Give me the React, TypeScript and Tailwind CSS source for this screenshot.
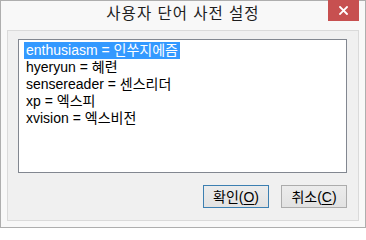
const entries = [
  { key: "enthusiasm", value: "인쑤지에즘" },
  { key: "hyeryun", value: "혜련" },
  { key: "sensereader", value: "센스리더" },
  { key: "xp", value: "엑스피" },
  { key: "xvision", value: "엑스비전" },
];

const uiFont = {
  fontFamily: '"Liberation Sans", "Noto Sans CJK KR", sans-serif',
};

function DialogButton({
  label,
  accel,
  primary,
}: {
  label: string;
  accel: string;
  primary?: boolean;
}) {
  return (
    <button
      type="button"
      className={
        primary
          ? "flex h-[23px] w-[66px] items-center justify-center border border-[#3c7fb1] bg-gradient-to-b from-[#ececec] to-[#e2e2e2] text-[14px] leading-none text-black"
          : "flex h-[23px] w-[66px] items-center justify-center border border-[#acacac] bg-gradient-to-b from-[#ececec] to-[#e2e2e2] text-[14px] leading-none text-black"
      }
    >
      {label}(<span className="underline underline-offset-2">{accel}</span>)
    </button>
  );
}

export default function App() {
  return (
    <div
      className="flex h-[228px] w-[366px] flex-col border border-[#aeaeae] bg-[#f8f8f8]"
      style={uiFont}
    >
      <div className="relative flex h-[29px] shrink-0 items-center justify-center pb-[3px]">
        <span className="text-[15.5px] leading-none tracking-[1px] text-[#1e1e1e]">
          사용자 단어 사전 설정
        </span>
        <div className="absolute -top-px right-[6px] flex h-[21px] w-[31px] items-center justify-center bg-[#c75050]">
          <svg width="9" height="9" viewBox="0 0 9 9">
            <path
              d="M1 1 L8 8 M8 1 L1 8"
              stroke="white"
              strokeWidth="1.8"
              strokeLinecap="square"
            />
          </svg>
        </div>
      </div>

      <div className="mx-[6px] mb-[6px] flex flex-1 flex-col border border-[#dadada] bg-[#f0f0f0] pb-[12px] pl-[10px] pr-[11px] pt-[8px]">
        <div className="h-[134px] border border-[#828790] bg-white pl-[5px] pt-[2px]">
          {entries.map((entry, i) => (
            <div key={entry.key} className="flex h-[17px]">
              <span
                className={
                  i === 0
                    ? "bg-[#3399ff] px-[2px] text-[14px] leading-[17px] text-white"
                    : "px-[2px] text-[14px] leading-[17px] text-black"
                }
              >
                {entry.key} = {entry.value}
              </span>
            </div>
          ))}
        </div>

        <div className="mt-auto flex justify-end gap-[12px]">
          <DialogButton label="확인" accel="O" primary />
          <DialogButton label="취소" accel="C" />
        </div>
      </div>
    </div>
  );
}
